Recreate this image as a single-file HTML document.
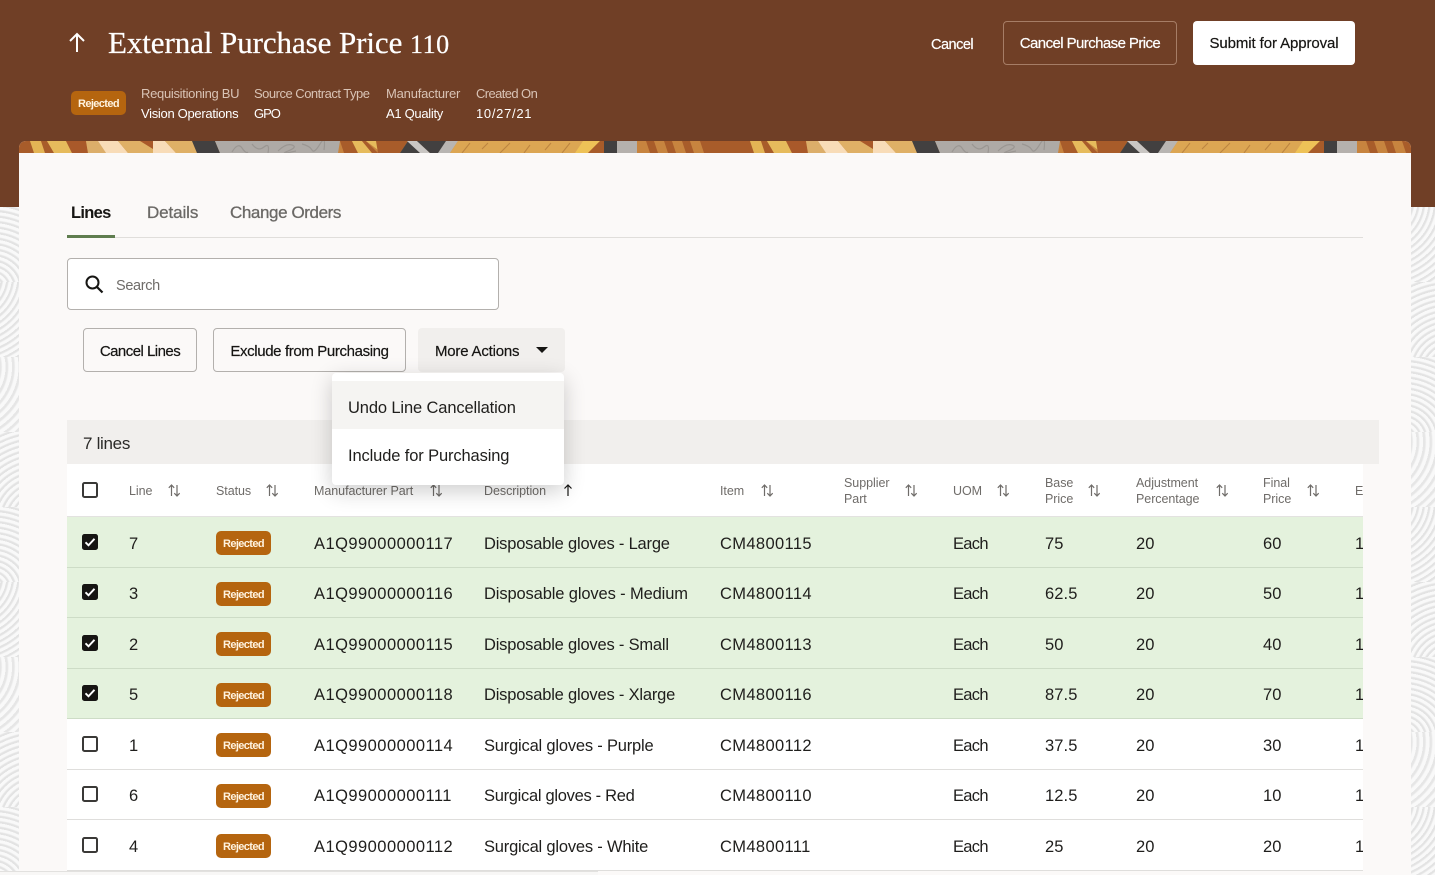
<!DOCTYPE html>
<html lang="en"><head><meta charset="utf-8"><title>External Purchase Price 110</title>
<style>
html,body{margin:0;padding:0}
body{position:relative;width:1435px;height:875px;overflow:hidden;background:#f8f8f8;font-family:"Liberation Sans",sans-serif;color:#161513}
div,span.t{position:absolute;white-space:nowrap}
#hd{left:0;top:0;width:1435px;height:207px;background:#703f26}
#card{left:19px;top:141px;width:1392px;height:734px;background:#fbf9f8;border-radius:7px 7px 0 0;overflow:hidden}
.t{position:absolute;white-space:nowrap;line-height:20px}
.w{color:#fff}
.m{font-size:13px;color:#d9c3b5;letter-spacing:-.3px}
.v{font-size:13px;color:#fff;letter-spacing:-.3px}
.btn{box-sizing:border-box;height:44px;border-radius:4px;font-size:15px;line-height:46px;text-align:center;-webkit-text-stroke:.2px currentColor}
.th{font-size:12.5px;color:#6f6c69;line-height:16px;letter-spacing:-.05px}
.r{left:67px;width:1296px;box-sizing:border-box;border-bottom:1px solid #dfdedc;background:#fff}
.g{background:#e4f2dd;border-bottom-color:#cddcc6}
.c{font-size:16.5px;line-height:22px;color:#1f1e1c;position:absolute;white-space:nowrap;letter-spacing:.1px;margin-top:1px}
.p{letter-spacing:.46px}.d{letter-spacing:-.2px}.i{letter-spacing:.36px}.e{letter-spacing:-.7px}
.b{left:216px;width:55px;height:24px;background:#b5650f;border-radius:5px;color:#fff3df;font-weight:bold;font-size:11px;line-height:27px;text-align:center;letter-spacing:-.62px}
.cb{left:82px;width:12px;height:12px;border:2px solid #3a3937;border-radius:2.5px;background:#fff}
.on{background:#161513;border-color:#161513}
svg{position:absolute;display:block}
.s{left:0;width:100%;height:75px}
.a{background:repeating-radial-gradient(circle at -8px 82px,#e3e3e3 0,#e3e3e3 1.6px,#f9f9f9 3px,#f9f9f9 5.5px)}
.k{background:repeating-radial-gradient(circle at -32px -6px,#e3e3e3 0,#e3e3e3 1.6px,#f9f9f9 3px,#f9f9f9 5.5px)}
.l{background:repeating-radial-gradient(circle at -40px 10px,#e6e6e6 0,#e6e6e6 2px,#f9f9f9 3.5px,#f9f9f9 6.5px)}
.n{background:repeating-radial-gradient(circle at 40px 90px,#e3e3e3 0,#e3e3e3 1.6px,#f9f9f9 3px,#f9f9f9 5.5px)}
</style></head>
<body>
<div style="left:0;top:207px;width:19px;height:668px;overflow:hidden">
<div class="s a" style="top:0"></div><div class="s k" style="top:75px"></div><div class="s l" style="top:150px"></div><div class="s n" style="top:225px"></div><div class="s a" style="top:300px"></div><div class="s k" style="top:375px"></div><div class="s l" style="top:450px"></div><div class="s n" style="top:525px"></div><div class="s a" style="top:600px"></div>
</div>
<div style="left:1411px;top:207px;width:24px;height:668px;overflow:hidden">
<div class="s k" style="top:0"></div><div class="s n" style="top:75px"></div><div class="s a" style="top:150px"></div><div class="s l" style="top:225px"></div><div class="s k" style="top:300px"></div><div class="s n" style="top:375px"></div><div class="s a" style="top:450px"></div><div class="s l" style="top:525px"></div><div class="s k" style="top:600px"></div>
</div>

<div id="hd"></div>

<div id="card">
<svg width="1392" height="12" style="left:0;top:0;filter:blur(.35px)">
<defs><pattern id="st" width="720" height="12" patternUnits="userSpaceOnUse" x="-19">
<rect width="720" height="12" fill="#c7843f"/>
<polygon points="0,0 32,0 34,12 0,12" fill="#a85c2a"/>
<polygon points="30,0 41,0 45,12 34,12" fill="#e3b455"/>
<polygon points="41,0 47,0 54,12 45,12" fill="#a85c2a"/>
<polygon points="47,0 66,0 72,12 54,12" fill="#e6bb5c"/>
<polygon points="66,0 86,0 88,12 72,12" fill="#a9592a"/>
<polygon points="86,0 98,0 106,12 88,12" fill="#dcae6a"/>
<polygon points="98,0 118,0 128,12 106,12" fill="#f8dcb8"/>
<polygon points="118,0 153,0 153,12 128,12" fill="#dfb066"/>
<polygon points="140,0 153,0 153,8" fill="#a9592a"/>
<polygon points="153,0 165,0 176,12 153,12" fill="#f8dcb8"/>
<polygon points="165,0 192,0 197,12 176,12" fill="#dfb066"/>
<polygon points="192,0 215,0 220,12 197,12" fill="#424040"/>
<polygon points="215,0 340,0 338,12 220,12" fill="#aeaaa6"/>
<g fill="none" stroke="#9a9692" stroke-width="1.2"><path d="M232 11q6-10 10-4t6 4M252 3q6 8 12 3t4 6M278 10q8-8 14-6t-4 6 8 0M302 3q8 2 10 6t8-6 4 6"/></g>
<polygon points="340,0 352,0 358,12 344,12" fill="#a85c2a"/>
<polygon points="352,0 362,0 372,12 358,12" fill="#e6bb5c"/>
<polygon points="362,0 366,0 378,12 372,12" fill="#a85c2a"/>
<polygon points="366,0 376,0 382,9 378,9" fill="#e6bb5c"/>
<polygon points="376,0 408,0 400,12 378,12" fill="#a85c2a"/>
<polygon points="408,0 417,0 430,12 400,12" fill="#424040"/>
<polygon points="407,0 417,0 430,12 420,12" fill="#c9c6c3"/>
<polygon points="417,0 448,0 440,12 430,12" fill="#424040"/>
<polygon points="446,0 458,0 450,12 438,12" fill="#b8b5b2"/>
<polygon points="458,0 590,0 575,12 450,12" fill="#dca653"/>
<g fill="none" stroke="#bd8540" stroke-width="1.1"><path d="M462 12l8-10M482 8l6-6M500 12l10-10M524 12l6-8M545 9l6-7M562 12l8-10"/></g>
<polygon points="583,0 600,0 588,12 575,12" fill="#eec257"/>
<polygon points="600,0 604,0 604,12 588,12" fill="#a85c2a"/>
<rect x="604" y="0" width="13" height="12" fill="#424040"/>
<rect x="617" y="0" width="20" height="12" fill="#b5b1ad"/>
<g fill="#a85c2a"><polygon points="646,0 654,0 658,12 650,12"/><polygon points="664,0 672,0 676,12 668,12"/><polygon points="682,0 690,0 694,12 686,12"/><polygon points="700,0 720,0 720,12 704,12"/></g>
</pattern></defs>
<rect width="1392" height="12" fill="url(#st)"/>
</svg>
</div>

<!-- Header -->
<svg width="20" height="24" style="left:67px;top:31px"><path d="M10 21V3M3 10l7-7 7 7" fill="none" stroke="#fff" stroke-width="2"/></svg>
<span class="t w" style="left:108px;top:24px;font:31px/38px 'Liberation Serif',serif;letter-spacing:-.08px;-webkit-text-stroke:.25px #fff">External Purchase Price <span style="font-size:26px;letter-spacing:.6px">110</span></span>
<span class="t w" style="left:931px;top:35px;font-size:14.5px;letter-spacing:-.5px;-webkit-text-stroke:.2px #fff">Cancel</span>
<div class="btn w" style="left:1003px;top:21px;width:174px;border:1px solid #a67d66;letter-spacing:-.58px;line-height:44px">Cancel Purchase Price</div>
<div class="btn" style="left:1193px;top:21px;width:162px;background:#fff;letter-spacing:-.1px">Submit for Approval</div>

<div class="b" style="left:71px;top:91px">Rejected</div>
<span class="t m" style="left:141px;top:84px">Requisitioning BU</span><span class="t v" style="left:141px;top:104px">Vision Operations</span>
<span class="t m" style="left:254px;top:84px;letter-spacing:-.5px">Source Contract Type</span><span class="t v" style="left:254px;top:104px;letter-spacing:-1px">GPO</span>
<span class="t m" style="left:386px;top:84px;letter-spacing:-.2px">Manufacturer</span><span class="t v" style="left:386px;top:104px;letter-spacing:-.3px">A1 Quality</span>
<span class="t m" style="left:476px;top:84px;letter-spacing:-.6px">Created On</span><span class="t v" style="left:476px;top:104px;letter-spacing:.7px">10/27/21</span>

<!-- Tabs -->
<span class="t" style="left:71px;top:203px;font-size:16.5px;letter-spacing:-.7px;font-weight:bold;color:#161513">Lines</span>
<span class="t" style="left:147px;top:203px;font-size:17px;letter-spacing:-.1px;color:#6b6966;-webkit-text-stroke:.3px #6b6966">Details</span>
<span class="t" style="left:230px;top:203px;font-size:17px;letter-spacing:-.4px;color:#6b6966;-webkit-text-stroke:.3px #6b6966">Change Orders</span>
<div style="left:67px;top:237px;width:1296px;height:1px;background:#e0dedb"></div>
<div style="left:67px;top:235px;width:48px;height:3px;background:#5f7d4f"></div>

<!-- Search -->
<div style="left:67px;top:258px;width:430px;height:50px;background:#fff;border:1px solid #b3b0ad;border-radius:4px"></div>
<svg width="20" height="20" style="left:84px;top:274px"><circle cx="8.5" cy="8.5" r="6" fill="none" stroke="#161513" stroke-width="2"/><path d="M13 13l5.5 5.5" stroke="#161513" stroke-width="2.2"/></svg>
<span class="t" style="left:116px;top:276px;font-size:14.5px;letter-spacing:-.35px;color:#6f6c69">Search</span>

<!-- Actions -->
<div class="btn" style="left:83px;top:328px;width:114px;border:1px solid #b3b0ad;letter-spacing:-.53px">Cancel Lines</div>
<div class="btn" style="left:213px;top:328px;width:193px;border:1px solid #b3b0ad;letter-spacing:-.37px">Exclude from Purchasing</div>
<div class="btn" style="left:418px;top:328px;width:147px;background:#f1efed;line-height:48px;text-align:left;padding-left:17px;letter-spacing:-.2px">More Actions</div>
<svg width="14" height="8" style="left:535px;top:346px"><path d="M1 1h12l-6 6z" fill="#161513"/></svg>

<!-- Count bar -->
<div style="left:67px;top:420px;width:1312px;height:44px;background:#f1efed"></div>
<span class="t" style="left:83px;top:434px;font-size:17px;letter-spacing:-.3px;color:#2b2a28">7 lines</span>

<!-- Table header -->
<div style="left:67px;top:464px;width:1296px;height:53px;background:#fff;border-bottom:1px solid #e3e2e0;box-sizing:border-box"></div>
<div class="cb" style="top:482px"></div>
<svg width="0" height="0"><defs><g id="so" fill="none" stroke="#6f6c69" stroke-width="1.2"><path d="M3.5 12V1M.8 3.8L3.5 1l2.7 2.8M9 1v11M6.3 9.2L9 12l2.7-2.8"/></g></defs></svg>
<span class="t th" style="left:129px;top:483px">Line</span><svg width="12" height="13" style="left:168px;top:484px"><use href="#so"/></svg>
<span class="t th" style="left:216px;top:483px">Status</span><svg width="12" height="13" style="left:266px;top:484px"><use href="#so"/></svg>
<span class="t th" style="left:314px;top:483px">Manufacturer Part</span><svg width="12" height="13" style="left:430px;top:484px"><use href="#so"/></svg>
<span class="t th" style="left:484px;top:483px">Description</span><svg width="10" height="13" style="left:563px;top:484px"><path d="M5 12V1M1.5 4.5L5 1l3.5 3.5" fill="none" stroke="#161513" stroke-width="1.2"/></svg>
<span class="t th" style="left:720px;top:483px">Item</span><svg width="12" height="13" style="left:761px;top:484px"><use href="#so"/></svg>
<span class="t th" style="left:844px;top:475px">Supplier<br>Part</span><svg width="12" height="13" style="left:905px;top:484px"><use href="#so"/></svg>
<span class="t th" style="left:953px;top:483px">UOM</span><svg width="12" height="13" style="left:997px;top:484px"><use href="#so"/></svg>
<span class="t th" style="left:1045px;top:475px">Base<br>Price</span><svg width="12" height="13" style="left:1088px;top:484px"><use href="#so"/></svg>
<span class="t th" style="left:1136px;top:475px">Adjustment<br>Percentage</span><svg width="12" height="13" style="left:1216px;top:484px"><use href="#so"/></svg>
<span class="t th" style="left:1263px;top:475px">Final<br>Price</span><svg width="12" height="13" style="left:1307px;top:484px"><use href="#so"/></svg>
<div style="left:1355px;top:483px;width:8px;height:16px;overflow:hidden"><span class="t th" style="left:0;top:0">Ef</span></div>

<!-- Rows -->
<div class="r g" style="top:517px;height:51px"></div>
<div class="r g" style="top:568px;height:50px"></div>
<div class="r g" style="top:618px;height:51px"></div>
<div class="r g" style="top:669px;height:50px"></div>
<div class="r" style="top:719px;height:51px"></div>
<div class="r" style="top:770px;height:50px"></div>
<div class="r" style="top:820px;height:51px"></div>

<svg width="0" height="0"><defs><path id="ck" d="M3.5 8.3l3 3 6-6.5" fill="none" stroke="#fff" stroke-width="1.9"/></defs></svg>

<div class="cb on" style="top:534px"></div><svg width="16" height="16" style="left:82px;top:534px"><use href="#ck"/></svg>
<span class="c" style="left:129px;top:532px">7</span><div class="b" style="top:531px">Rejected</div><span class="c p" style="left:314px;top:532px">A1Q99000000117</span><span class="c d" style="left:484px;top:532px">Disposable gloves - Large</span><span class="c i" style="left:720px;top:532px">CM4800115</span><span class="c e" style="left:953px;top:532px">Each</span><span class="c" style="left:1045px;top:532px">75</span><span class="c" style="left:1136px;top:532px">20</span><span class="c" style="left:1263px;top:532px">60</span><div style="left:1355px;top:532px;width:8px;height:24px;overflow:hidden"><span class="c" style="left:0;top:0">1</span></div>

<div class="cb on" style="top:584px"></div><svg width="16" height="16" style="left:82px;top:584px"><use href="#ck"/></svg>
<span class="c" style="left:129px;top:582px">3</span><div class="b" style="top:582px">Rejected</div><span class="c p" style="left:314px;top:582px">A1Q99000000116</span><span class="c d" style="left:484px;top:582px;letter-spacing:-.13px">Disposable gloves - Medium</span><span class="c i" style="left:720px;top:582px">CM4800114</span><span class="c e" style="left:953px;top:582px">Each</span><span class="c" style="left:1045px;top:582px">62.5</span><span class="c" style="left:1136px;top:582px">20</span><span class="c" style="left:1263px;top:582px">50</span><div style="left:1355px;top:582px;width:8px;height:24px;overflow:hidden"><span class="c" style="left:0;top:0">1</span></div>

<div class="cb on" style="top:635px"></div><svg width="16" height="16" style="left:82px;top:635px"><use href="#ck"/></svg>
<span class="c" style="left:129px;top:633px">2</span><div class="b" style="top:632px">Rejected</div><span class="c p" style="left:314px;top:633px">A1Q99000000115</span><span class="c d" style="left:484px;top:633px">Disposable gloves - Small</span><span class="c i" style="left:720px;top:633px">CM4800113</span><span class="c e" style="left:953px;top:633px">Each</span><span class="c" style="left:1045px;top:633px">50</span><span class="c" style="left:1136px;top:633px">20</span><span class="c" style="left:1263px;top:633px">40</span><div style="left:1355px;top:633px;width:8px;height:24px;overflow:hidden"><span class="c" style="left:0;top:0">1</span></div>

<div class="cb on" style="top:685px"></div><svg width="16" height="16" style="left:82px;top:685px"><use href="#ck"/></svg>
<span class="c" style="left:129px;top:683px">5</span><div class="b" style="top:683px">Rejected</div><span class="c p" style="left:314px;top:683px">A1Q99000000118</span><span class="c d" style="left:484px;top:683px">Disposable gloves - Xlarge</span><span class="c i" style="left:720px;top:683px">CM4800116</span><span class="c e" style="left:953px;top:683px">Each</span><span class="c" style="left:1045px;top:683px">87.5</span><span class="c" style="left:1136px;top:683px">20</span><span class="c" style="left:1263px;top:683px">70</span><div style="left:1355px;top:683px;width:8px;height:24px;overflow:hidden"><span class="c" style="left:0;top:0">1</span></div>

<div class="cb" style="top:736px"></div>
<span class="c" style="left:129px;top:734px">1</span><div class="b" style="top:733px">Rejected</div><span class="c p" style="left:314px;top:734px">A1Q99000000114</span><span class="c d" style="left:484px;top:734px">Surgical gloves - Purple</span><span class="c i" style="left:720px;top:734px">CM4800112</span><span class="c e" style="left:953px;top:734px">Each</span><span class="c" style="left:1045px;top:734px">37.5</span><span class="c" style="left:1136px;top:734px">20</span><span class="c" style="left:1263px;top:734px">30</span><div style="left:1355px;top:734px;width:8px;height:24px;overflow:hidden"><span class="c" style="left:0;top:0">1</span></div>

<div class="cb" style="top:786px"></div>
<span class="c" style="left:129px;top:784px">6</span><div class="b" style="top:784px">Rejected</div><span class="c p" style="left:314px;top:784px">A1Q99000000111</span><span class="c d" style="left:484px;top:784px;letter-spacing:-.3px">Surgical gloves - Red</span><span class="c i" style="left:720px;top:784px">CM4800110</span><span class="c e" style="left:953px;top:784px">Each</span><span class="c" style="left:1045px;top:784px">12.5</span><span class="c" style="left:1136px;top:784px">20</span><span class="c" style="left:1263px;top:784px">10</span><div style="left:1355px;top:784px;width:8px;height:24px;overflow:hidden"><span class="c" style="left:0;top:0">1</span></div>

<div class="cb" style="top:837px"></div>
<span class="c" style="left:129px;top:835px">4</span><div class="b" style="top:834px">Rejected</div><span class="c p" style="left:314px;top:835px">A1Q99000000112</span><span class="c d" style="left:484px;top:835px">Surgical gloves - White</span><span class="c i" style="left:720px;top:835px">CM4800111</span><span class="c e" style="left:953px;top:835px">Each</span><span class="c" style="left:1045px;top:835px">25</span><span class="c" style="left:1136px;top:835px">20</span><span class="c" style="left:1263px;top:835px">20</span><div style="left:1355px;top:835px;width:8px;height:24px;overflow:hidden"><span class="c" style="left:0;top:0">1</span></div>

<!-- Bottom band -->
<div style="left:0;top:871px;width:598px;height:4px;background:#f8f7f6;border-top:1px solid #e2e1df;box-sizing:border-box"></div>

<!-- Menu -->
<div style="left:332px;top:373px;width:232px;height:112px;background:#fff;border-radius:4px;box-shadow:0 6px 22px rgba(0,0,0,.2)">
<div style="left:0;top:8px;width:232px;height:48px;background:#f5f4f2"></div>
<span class="c" style="left:16px;top:23px;letter-spacing:-.13px">Undo Line Cancellation</span>
<span class="c" style="left:16px;top:71px;letter-spacing:-.13px">Include for Purchasing</span>
</div>
</body></html>
